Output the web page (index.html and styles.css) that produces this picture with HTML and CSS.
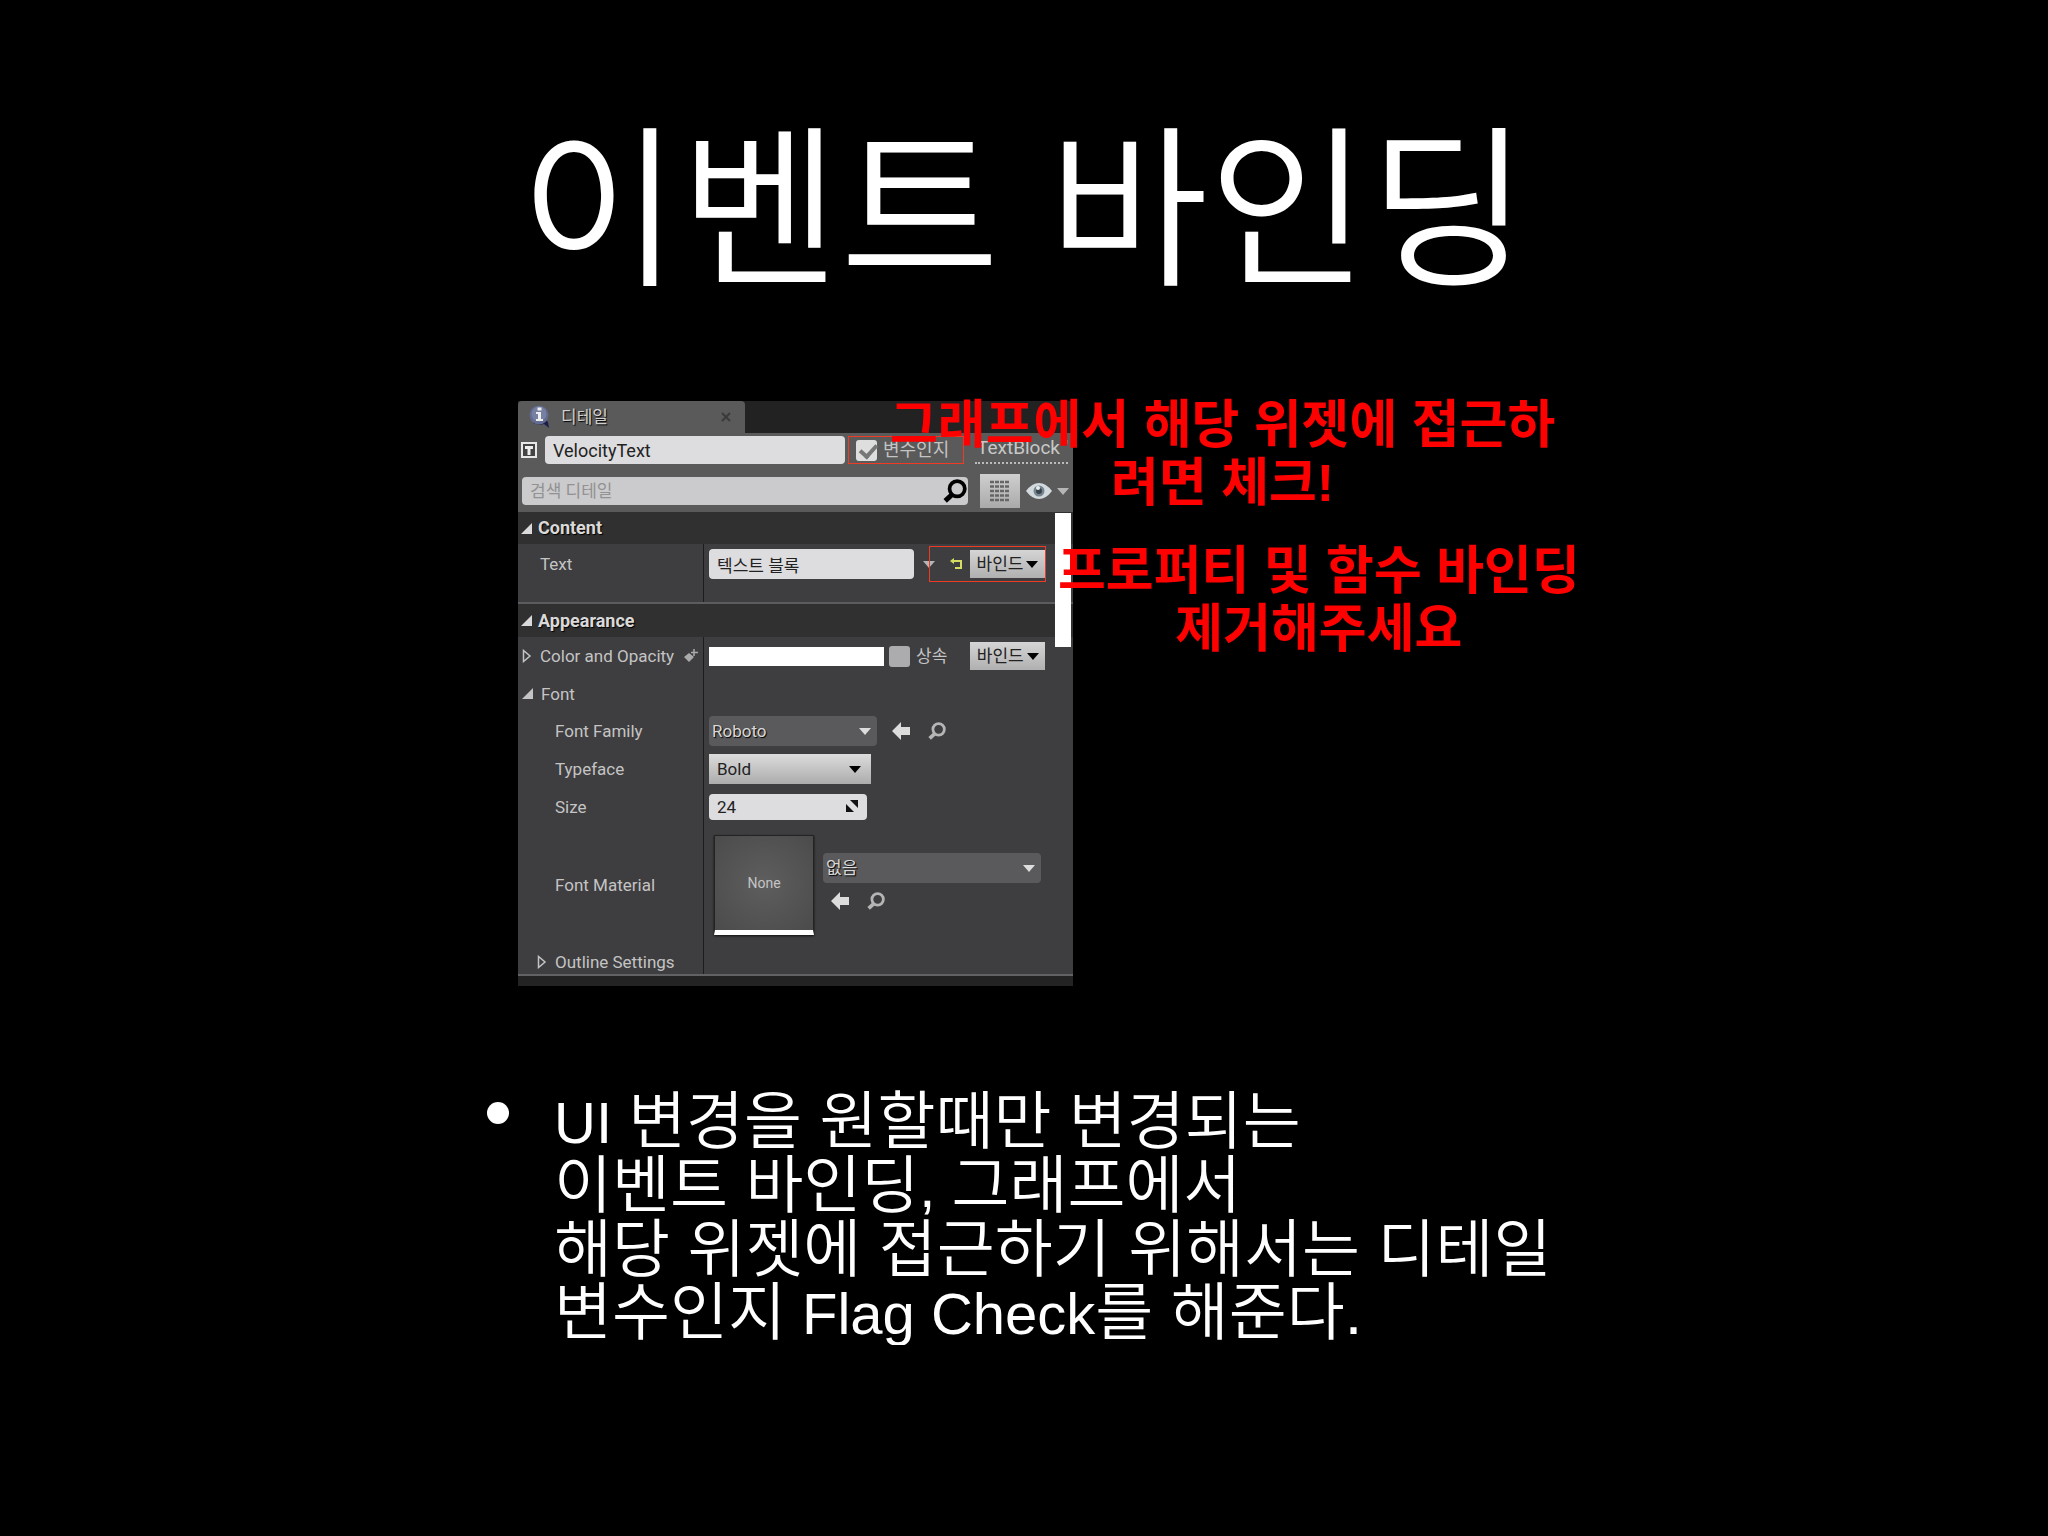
FILE: index.html
```html
<!DOCTYPE html>
<html lang="ko">
<head>
  <meta charset="utf-8">
  <title>이벤트 바인딩</title>
  <link rel="stylesheet" href="styles.css">
</head>
<body>
<svg class="defs" aria-hidden="true">
  <symbol id="caret" viewBox="0 0 12 7"><path d="M0 0h12L6 7z"/></symbol>
  <symbol id="open" viewBox="0 0 11 11"><path d="M11 0v11H0z"/></symbol>
  <symbol id="closed" viewBox="0 0 10 14"><path d="M1.500 1.500v11L8 7z" fill="none" stroke="currentColor" stroke-width="1.500"/></symbol>
  <symbol id="arrow" viewBox="0 0 18 18"><path d="M0 9l9-9v5h9v8H9v5z"/></symbol>
  <symbol id="lens" viewBox="0 0 22 22"><circle cx="13" cy="9" r="7" fill="none" stroke="currentColor" stroke-width="3.400"/><path d="M8 14.500L2 20" stroke="currentColor" stroke-width="4.500"/></symbol>
</svg>
<main class="slide">
  <h1 class="title">이벤트 바인딩</h1>
  <div class="figure">
    <section class="panel">
      <div class="tabs">
        <div class="tab">
          <svg class="info" viewBox="0 0 24 24"><path d="M5 18q7 3 11 1l5 4-1-6-3-3z" fill="#1d1d4c"/><circle cx="11" cy="10" r="9.500" fill="#626b90"/><circle cx="11" cy="9" r="7.500" fill="#7780a2"/><path d="M9.500 2.500h4v3h-4zM8 7h5v7h2v2H8v-2h2V9H8z" fill="#eee"/></svg>
          <span>디테일</span>
          <svg class="close" viewBox="0 0 10 10"><path d="M1 1l8 8M9 1L1 9" stroke="#3a3a3a" stroke-width="2"/></svg>
        </div>
      </div>
      <div class="head">
        <div class="name-row">
          <svg class="type" viewBox="0 0 16 16"><path d="M1 1h14v14H1z" fill="#444" stroke="#e8e8e8" stroke-width="2"/><path d="M4 4h8v3H9.500v6h-3V7H4z" fill="#eee"/></svg>
          <input class="field name" type="text" value="VelocityText" aria-label="Name">
          <div class="variable">
            <input class="check" type="checkbox" id="variable" checked>
            <label for="variable">변수인지</label>
          </div>
          <a class="class-link" href="#">TextBlock '</a>
        </div>
        <div class="search-row">
          <div class="search">
            <input class="field" type="search" placeholder="검색 디테일" aria-label="검색 디테일">
            <svg class="lens"><use href="#lens"/></svg>
          </div>
          <button class="grid-button" aria-label="Grid"><svg viewBox="0 0 20 22"><path d="M0 2h20M0 6.500h20M0 11h20M0 15.500h20M0 20h20" stroke="#666" stroke-width="2.500" stroke-dasharray="4 1"/></svg></button>
          <button class="eye-button" aria-label="View">
            <svg class="eye" viewBox="0 0 26 16"><path d="M0 8Q6 0 13 0t13 8q-6 8-13 8T0 8z" fill="#d3dade"/><circle cx="13" cy="8" r="5.500" fill="#77858f"/><circle cx="13" cy="8" r="3" fill="#39444d"/><circle cx="12" cy="5" r="2" fill="#e8eef0"/></svg>
            <svg class="caret"><use href="#caret"/></svg>
          </button>
        </div>
      </div>
      <div class="details">
        <h2 class="category"><svg class="open"><use href="#open"/></svg>Content</h2>
        <div class="row text-row">
          <label class="label" for="text">Text</label>
          <div class="value">
            <input class="field text" type="text" id="text" value="텍스트 블록">
            <svg class="caret text-caret"><use href="#caret"/></svg>
            <div class="binding">
              <svg class="reset" viewBox="0 0 12 12"><path d="M3 3h8v7H5" fill="none" stroke="#d4dd62" stroke-width="2"/><path d="M0 3l4-3v6z" fill="#d4dd62"/></svg>
              <button class="bind">바인드<svg class="caret"><use href="#caret"/></svg></button>
            </div>
          </div>
        </div>
        <h2 class="category ruled"><svg class="open"><use href="#open"/></svg>Appearance</h2>
        <div class="row">
          <div class="label">
            <svg class="closed"><use href="#closed"/></svg>Color and Opacity
            <svg class="key" viewBox="0 0 14 14"><path d="M0 8l5-4 5 4-5 5z" fill="#aaa"/><path d="M10 0v7M7 3.500h7" stroke="#aaa" stroke-width="1.500"/></svg>
          </div>
          <div class="value">
            <button class="swatch" aria-label="Color"></button>
            <input class="check inherit" type="checkbox" id="inherit">
            <label for="inherit">상속</label>
            <button class="bind end">바인드<svg class="caret"><use href="#caret"/></svg></button>
          </div>
        </div>
        <div class="row font-row">
          <div class="label"><svg class="open"><use href="#open"/></svg>Font</div>
          <div class="value"></div>
        </div>
        <div class="row">
          <label class="label sub" for="family">Font Family</label>
          <div class="value">
            <div class="drop dark family">
              <select id="family"><option>Roboto</option></select>
              <svg class="caret"><use href="#caret"/></svg>
            </div>
            <div class="tools">
              <button class="icon" aria-label="Use"><svg><use href="#arrow"/></svg></button>
              <button class="icon" aria-label="Find"><svg><use href="#lens"/></svg></button>
            </div>
          </div>
        </div>
        <div class="row">
          <label class="label sub" for="typeface">Typeface</label>
          <div class="value">
            <div class="drop typeface">
              <select id="typeface"><option>Bold</option></select>
              <svg class="caret"><use href="#caret"/></svg>
            </div>
          </div>
        </div>
        <div class="row">
          <label class="label sub" for="size">Size</label>
          <div class="value">
            <div class="size">
              <input class="field" type="text" id="size" value="24">
              <svg class="spin" viewBox="0 0 12 12"><path d="M4 0h8v8zM0 4v8h8z"/></svg>
            </div>
          </div>
        </div>
        <div class="row material-row">
          <label class="label sub" for="material">Font Material</label>
          <div class="value">
            <div class="thumb">None</div>
            <div class="asset">
              <div class="drop dark">
                <select id="material"><option>없음</option></select>
                <svg class="caret"><use href="#caret"/></svg>
              </div>
              <div class="tools">
                <button class="icon" aria-label="Use"><svg><use href="#arrow"/></svg></button>
                <button class="icon" aria-label="Find"><svg><use href="#lens"/></svg></button>
              </div>
            </div>
          </div>
        </div>
        <div class="row outline-row">
          <div class="label sub"><svg class="closed"><use href="#closed"/></svg>Outline Settings</div>
          <div class="value"></div>
        </div>
        <div class="scrollbar"></div>
      </div>
    </section>
    <p class="note note-check">그래프에서 해당 위젯에 접근하<br>려면 체크!</p>
    <p class="note note-bind">프로퍼티 및 함수 바인딩<br>제거해주세요</p>
  </div>
  <ul class="points">
    <li><span class="latin">UI </span>변경을 원할때만 변경되는<br>이벤트 바인딩<span class="latin">, </span>그래프에서<br>해당 위젯에 접근하기 위해서는 디테일<br>변수인지<span class="latin"> Flag Check</span>를 해준다.</li>
  </ul>
</main>
</body>
</html>
```
FILE: styles.css
```css
* {
  box-sizing: border-box;
}

body {
  margin: 0;
  background: #000;
  color: #fff;
  font-family: "Liberation Sans", "Noto Sans CJK KR", sans-serif;
}

.defs {
  display: none;
}

.slide {
  max-width: 1100px;
  margin: 0 auto;
  padding-top: 108px;
}

.title {
  margin: 0;
  font-size: 174px;
  font-weight: 350;
  line-height: 208px;
  text-align: center;
  white-space: nowrap;
}

.figure {
  position: relative;
  margin: 85px 0 0 44px;
}

/* details panel */
.panel {
  width: 555px;
  background: #3e3d3f;
  border-bottom: 10px solid #232324;
  color: #c4c4c4;
  font-family: Roboto, "Noto Sans CJK KR", sans-serif;
  font-size: 17px;
  line-height: 20px;
  overflow: hidden;
}

.panel input,
.panel select,
.panel button {
  margin: 0;
  border: none;
  padding: 0;
  color: #222;
  font: inherit;
}

.panel svg {
  flex: none;
  fill: currentColor;
}

.tabs {
  background: #222223;
}

.tab {
  display: flex;
  align-items: center;
  width: 227px;
  height: 32px;
  padding: 0 14px 0 10px;
  border-radius: 4px 4px 0 0;
  background: #5a5a5a;
  color: #d0d0d0;
  text-shadow: 1px 1px 1px #000;
}

.info {
  width: 24px;
  height: 24px;
  margin-right: 9px;
}

.close {
  width: 10px;
  height: 10px;
  margin-left: auto;
}

.head {
  height: 79px;
  padding-top: 3px;
  background: #5a5a5a;
}

.name-row,
.search-row {
  display: flex;
  align-items: center;
}

.name-row {
  height: 28px;
  padding-left: 3px;
}

.type {
  width: 16px;
  height: 16px;
  margin-right: 8px;
}

.panel .field {
  height: 28px;
  padding: 0 8px;
  border-radius: 4px;
  background: #dddcde;
}

.panel .name {
  width: 300px;
  font-size: 18px;
}

.variable {
  display: flex;
  align-items: center;
  gap: 6px;
  width: 116px;
  height: 28px;
  margin-left: 3px;
  padding-left: 7px;
  border: 1px solid #f03a24;
  font-size: 18px;
}

.check {
  appearance: none;
  width: 21px;
  height: 21px;
  border-radius: 3px;
  background: #dededf;
}

.check:checked::before {
  content: "";
  display: block;
  width: 7px;
  height: 13px;
  margin: 1px 0 0 7px;
  border: solid #777;
  border-width: 0 4px 4px 0;
  transform: rotate(42deg);
}

.class-link {
  margin-left: 11px;
  border-bottom: 2px dotted #bbb;
  padding: 2px 0 4px 2px;
  color: #c8c8c8;
  font-size: 19px;
  text-decoration: none;
  white-space: nowrap;
}

.search-row {
  height: 34px;
  margin-top: 10px;
  padding-left: 4px;
}

.search {
  position: relative;
  width: 446px;
}

.search .field {
  display: block;
  width: 100%;
  background: #cbcacc;
}

.search .field::placeholder {
  color: #929292;
}

.search .lens {
  position: absolute;
  top: 2px;
  right: 1px;
  width: 24px;
  height: 24px;
  color: #000;
}

.panel .grid-button {
  width: 40px;
  height: 34px;
  margin-left: 12px;
  background: linear-gradient(#cfcfd0, #aaa);
}

.grid-button svg {
  display: block;
  width: 20px;
  height: 22px;
  margin: 0 auto;
}

.panel .eye-button {
  display: flex;
  align-items: center;
  gap: 5px;
  margin-left: 6px;
  background: none;
}

.eye {
  width: 26px;
  height: 16px;
}

.caret {
  width: 12px;
  height: 7px;
}

.eye-button .caret,
.text-caret {
  color: #b5b5b5;
}

.details {
  position: relative;
  border-bottom: 2px solid #626163;
}

.scrollbar {
  position: absolute;
  top: 1px;
  right: 2px;
  width: 16px;
  height: 134px;
  background: #fff;
}

.category {
  display: flex;
  align-items: center;
  gap: 6px;
  height: 32px;
  margin: 0;
  padding-left: 3px;
  background: #303031;
  color: #dadada;
  font-size: 18px;
  font-weight: 700;
  text-shadow: 1px 1px 1px #000;
}

.ruled {
  height: 35px;
  border-top: 2px solid #5c5b5d;
}

.open {
  width: 11px;
  height: 11px;
}

.closed {
  width: 10px;
  height: 14px;
}

.row {
  display: grid;
  grid-template-columns: 185px 1fr;
  height: 38px;
}

.text-row {
  height: 58px;
}

.text-row > * {
  padding-bottom: 18px;
}

.font-row {
  height: 37px;
}

.label {
  display: flex;
  align-items: center;
  padding-left: 22px;
}

.label .open,
.label .closed {
  margin: 0 8px 0 -18px;
}

.label.sub {
  padding-left: 37px;
}

.key {
  width: 14px;
  height: 14px;
  margin-left: 10px;
}

.value {
  display: flex;
  align-items: center;
  border-left: 1px solid #1d1d1e;
  padding-left: 5px;
}

.panel .text {
  width: 205px;
  height: 30px;
}

.text-caret {
  margin: 0 -6px 0 9px;
}

.binding {
  display: flex;
  align-items: center;
  gap: 8px;
  width: 117px;
  height: 36px;
  border: 1px solid #f03a24;
  padding-left: 20px;
}

.reset {
  width: 12px;
  height: 12px;
}

.panel .bind {
  display: flex;
  align-items: center;
  justify-content: center;
  gap: 3px;
  width: 75px;
  height: 28px;
  background: linear-gradient(#d5d5d6, #b0b0b0);
  white-space: nowrap;
}

.bind .caret {
  color: #000;
}

.panel .end {
  margin-left: 23px;
}

.panel .swatch {
  width: 175px;
  height: 19px;
  background: #fff;
}

.panel .inherit {
  margin: 0 6px 0 5px;
  background: #acabad;
}

.drop {
  position: relative;
}

.drop select {
  appearance: none;
  display: block;
  width: 100%;
  height: 30px;
  padding: 0 8px;
  background: linear-gradient(#dcdcdd, #acacad);
}

.drop .caret {
  position: absolute;
  top: 12px;
  right: 10px;
  color: #000;
}

.drop.dark select {
  border-radius: 4px;
  padding: 0 3px;
  background: #5a595b;
  color: #d8d8d8;
  text-shadow: 1px 1px 1px #000;
}

.drop.dark .caret {
  right: 6px;
  color: #ddd;
}

.family {
  width: 168px;
}

.typeface {
  width: 162px;
}

.tools {
  display: flex;
  gap: 18px;
  padding-left: 15px;
}

.icon {
  background: none;
}

.icon svg {
  display: block;
  width: 18px;
  height: 18px;
  color: #dcdcdc;
}

.icon + .icon svg {
  color: #b5b5b5;
}

.size {
  position: relative;
  width: 158px;
}

.size .field {
  display: block;
  width: 100%;
  height: 26px;
}

.spin {
  position: absolute;
  top: 6px;
  right: 9px;
  width: 12px;
  height: 12px;
  color: #111;
}

.material-row {
  height: 117px;
}

.thumb {
  display: flex;
  align-items: center;
  justify-content: center;
  width: 100px;
  height: 100px;
  margin-left: 5px;
  border: 1px solid #232323;
  border-bottom: 5px solid #fff;
  background: radial-gradient(#5e5e5f, #4b4b4c);
  box-shadow: 0 1px 2px #111;
  font-size: 14px;
}

.asset {
  width: 218px;
  margin-left: 9px;
  padding-bottom: 6px;
}

.asset .tools {
  margin-top: 9px;
  padding-left: 8px;
}

.outline-row {
  height: 31px;
}

.outline-row .label {
  padding-top: 6px;
}

/* red remarks lying over the panel */
.note {
  position: absolute;
  margin: 0;
  color: #f00;
  font-size: 52px;
  font-weight: 700;
  line-height: 58px;
  text-align: center;
  white-space: nowrap;
}

.note-check {
  top: -5px;
  left: 372px;
}

.note-bind {
  top: 141px;
  left: 540px;
}

.points {
  margin: 104px 0 0;
  padding: 0 0 0 80px;
  list-style: none;
  font-size: 63px;
  font-weight: 350;
  line-height: 63px;
  white-space: nowrap;
}

.latin {
  font-size: 58px;
}

.points li {
  position: relative;
}

.points li::before {
  content: "";
  position: absolute;
  top: 12px;
  left: -67px;
  width: 22px;
  height: 22px;
  border-radius: 50%;
  background: #fff;
}
```
